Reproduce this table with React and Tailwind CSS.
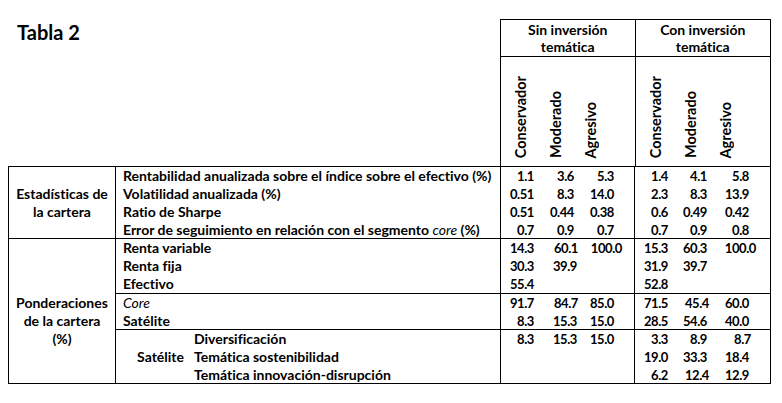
import React from 'react';

// desplazamientos de algunas cifras (la tabla original usa tabulaciones irregulares)
const shift = {
    2: 'translate-x-[2px]',
    3: 'translate-x-[3px]',
    4: 'translate-x-[4px]',
    7: 'translate-x-[7px]',
    8: 'translate-x-[8px]',
};

const sinWidths = ['w-[36px]', 'w-[40px]', 'w-[40px]'];
const conWidths = ['w-[36px]', 'w-[39px]', 'w-[42px]'];

const stats = [
    { label: 'Rentabilidad anualizada sobre el índice sobre el efectivo (%)', sin: ['1.1', '3.6', '5.3'], con: ['1.4', '4.1', '5.8'] },
    { label: 'Volatilidad anualizada (%)', sin: ['0.51', '8.3', '14.0'], con: ['2.3', '8.3', '13.9'] },
    { label: 'Ratio de Sharpe', sin: ['0.51', '0.44', '0.38'], con: ['0.6', '0.49', '0.42'] },
    {
        label: (
            <>
                Error de seguimiento en relación con el segmento <span className="italic font-normal">core</span> (%)
            </>
        ),
        sin: ['0.7', '0.9', '0.7'],
        con: ['0.7', '0.9', '0.8'],
    },
];

const assets = [
    { label: 'Renta variable', sin: ['14.3', ['60.1', 4], ['100.0', 8]], con: ['15.3', '60.3', ['100.0', 7]] },
    { label: 'Renta fija', sin: ['30.3', ['39.9', 3], ''], con: ['31.9', '39.7', ''] },
    { label: 'Efectivo', sin: ['55.4', '', ''], con: ['52.8', '', ''] },
];

const segments = [
    { label: <span className="italic font-normal">Core</span>, sin: ['91.7', ['84.7', 4], '85.0'], con: ['71.5', ['45.4', 2], '60.0'] },
    { label: 'Satélite', sin: ['8.3', ['15.3', 3], '15.0'], con: ['28.5', '54.6', '40.0'] },
];

const satellite = [
    { label: 'Diversificación', sin: ['8.3', ['15.3', 3], '15.0'], con: ['3.3', '8.9', ['8.7', 2]] },
    { label: 'Temática sostenibilidad', sin: ['', '', ''], con: ['19.0', '33.3', '18.4'] },
    { label: 'Temática innovación-disrupción', sin: ['', '', ''], con: ['6.2', ['12.4', 2], '12.9'] },
];

function Numbers({ values, widths, className }) {
    return (
        <div className={`flex border-l border-black text-[13px] tracking-[-0.4px] ${className}`}>
            {values.map((v, i) => {
                const text = Array.isArray(v) ? v[0] : v;
                const s = Array.isArray(v) ? shift[v[1]] : '';
                return (
                    <div key={i} className={`${widths[i]} pr-[3px] text-right`}>
                        <span className={`inline-block ${s}`}>{text}</span>
                    </div>
                );
            })}
        </div>
    );
}

function Row({ row }) {
    return (
        <div className="flex flex-1 items-center">
            <div className="w-[384px] pl-[7px] whitespace-nowrap">{row.label}</div>
            <Numbers values={row.sin} widths={sinWidths} className="w-[134px] h-full items-center" />
            <Numbers values={row.con} widths={conWidths} className="w-[136px] h-full items-center" />
        </div>
    );
}

function Group({ rows, height, top }) {
    return (
        <div className={`flex flex-col ${height} ${top ? 'border-t border-black' : ''}`}>
            {rows.map((row, i) => (
                <Row key={i} row={row} />
            ))}
        </div>
    );
}

function Vertical({ children }) {
    return (
        <div className="w-[35px] flex justify-center">
            <span className="[writing-mode:vertical-rl] rotate-180 leading-[15px] text-[14.5px]">{children}</span>
        </div>
    );
}

export default function App() {
    return (
        <div className="w-[782px] h-[403px] bg-white text-black font-['Lato',sans-serif] font-bold text-[14px] leading-[18px] pt-[19px] [font-variant-ligatures:none]">
            {/* cabecera */}
            <div className="flex">
                <div className="w-[500px] pl-[17px] pt-[1px]">
                    <h1 className="text-[20px] leading-[24px] font-bold">Tabla 2</h1>
                </div>
                <div className="w-[271px] border-t border-x border-black">
                    <div className="flex h-[37px] border-b border-black leading-[17px] text-center">
                        <div className="w-[134px] flex items-center justify-center">Sin inversión<br />temática</div>
                        <div className="w-[136px] border-l border-black flex items-center justify-center">Con inversión<br />temática</div>
                    </div>
                    <div className="flex h-[109px]">
                        <div className="w-[134px] flex items-end pl-[2px] pb-[8px]">
                            <Vertical>Conservador</Vertical>
                            <Vertical>Moderado</Vertical>
                            <Vertical>Agresivo</Vertical>
                        </div>
                        <div className="w-[136px] border-l border-black flex items-end pl-[2px] pb-[8px]">
                            <Vertical>Conservador</Vertical>
                            <Vertical>Moderado</Vertical>
                            <Vertical>Agresivo</Vertical>
                        </div>
                    </div>
                </div>
            </div>

            {/* cuerpo */}
            <div className="ml-[8px] w-[763px] flex border border-black">
                <div className="w-[106px] flex flex-col text-center">
                    <div className="h-[71px] flex flex-col justify-center">
                        <div>Estadísticas de</div>
                        <div>la cartera</div>
                    </div>
                    <div className="flex-1 border-t border-black pt-[55px]">
                        <div>Ponderaciones</div>
                        <div>de la cartera</div>
                        <div>(%)</div>
                    </div>
                </div>
                <div className="flex-1 border-l border-black flex flex-col">
                    <Group rows={stats} height="h-[71px]" />
                    <Group rows={assets} height="h-[55px]" top />
                    <Group rows={segments} height="h-[36px]" top />
                    <div className="flex h-[54px] border-t border-black">
                        <div className="w-[70px] flex items-center justify-end pr-[2px]">Satélite</div>
                        <div className="flex flex-col">
                            {satellite.map((row, i) => (
                                <div key={i} className="flex flex-1 items-center">
                                    <div className="w-[314px] pl-[8px] whitespace-nowrap">{row.label}</div>
                                    <Numbers values={row.sin} widths={sinWidths} className="w-[134px] h-full items-center" />
                                    <Numbers values={row.con} widths={conWidths} className="w-[136px] h-full items-center" />
                                </div>
                            ))}
                        </div>
                    </div>
                </div>
            </div>
        </div>
    );
}
